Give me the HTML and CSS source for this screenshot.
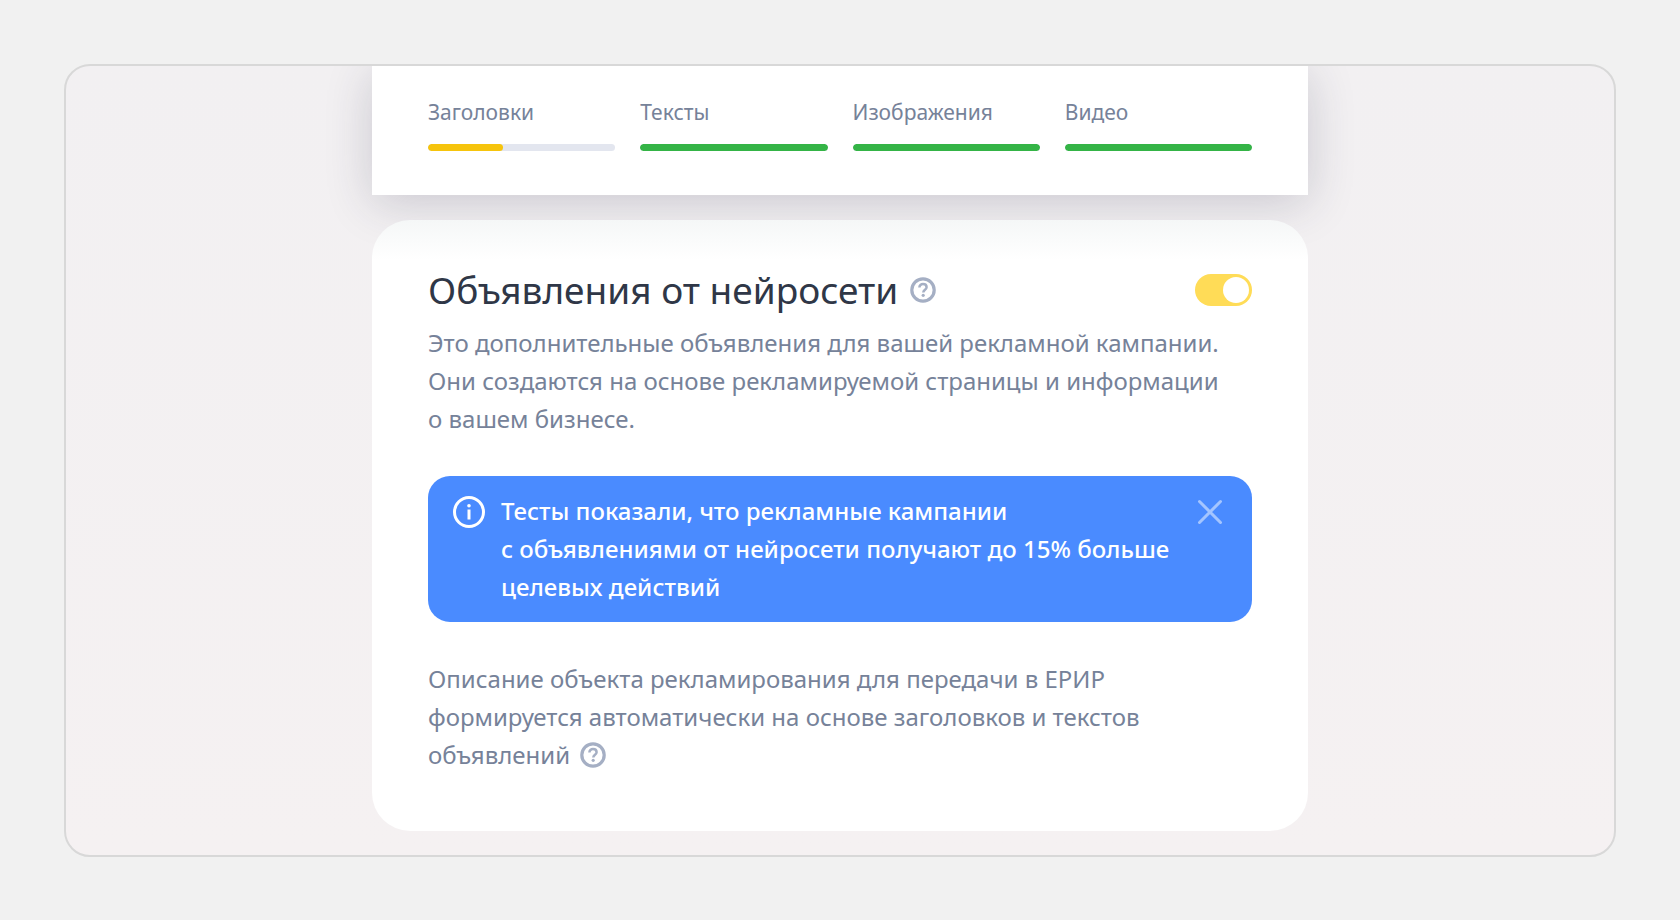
FILE: index.html
```html
<!DOCTYPE html>
<html lang="ru">
<head>
<meta charset="utf-8">
<meta name="viewport" content="width=device-width, initial-scale=1">
<title>Объявления от нейросети</title>
<link rel="stylesheet" href="styles.css">
</head>
<body>
<main class="frame">

<section class="quality">
  <div class="metric">
    <span class="metric-name">Заголовки</span>
    <div class="bar"><div class="fill part" style="width:40%"></div></div>
  </div>
  <div class="metric">
    <span class="metric-name">Тексты</span>
    <div class="bar"><div class="fill" style="width:100%"></div></div>
  </div>
  <div class="metric">
    <span class="metric-name">Изображения</span>
    <div class="bar"><div class="fill" style="width:100%"></div></div>
  </div>
  <div class="metric">
    <span class="metric-name">Видео</span>
    <div class="bar"><div class="fill" style="width:100%"></div></div>
  </div>
</section>

<section class="card">
  <div class="head">
    <h1 id="title">Объявления от нейросети</h1>
    <button type="button" class="help" aria-label="Подсказка">
      <svg width="26" height="26" viewBox="0 0 26 26" fill="none" stroke="currentColor">
        <circle cx="13" cy="13" r="11.2" stroke-width="3.2"/>
        <path d="M9.4 10.4C9.4 8.3 11 7.1 13 7.1s3.6 1.2 3.6 3.1c0 2.5-3.3 2.5-3.3 5.2" stroke-width="2.5"/>
        <circle cx="13.2" cy="18.3" r="1.6" fill="currentColor" stroke="none"/>
      </svg>
    </button>
    <input type="checkbox" class="toggle" aria-labelledby="title" checked>
  </div>
  <p>Это дополнительные объявления для вашей рекламной кампании.<br>
  Они создаются на основе рекламируемой страницы и информации<br>
  о вашем бизнесе.</p>

  <div class="notice">
    <svg class="info" width="32" height="32" viewBox="0 0 32 32" fill="none" stroke="currentColor">
      <circle cx="16" cy="16" r="14.5" stroke-width="3"/>
      <path d="M16 13.5v10" stroke-width="3"/>
      <circle cx="16" cy="9.8" r="1.8" fill="currentColor" stroke="none"/>
    </svg>
    <p>Тесты показали, что рекламные кампании<br>
    с объявлениями от нейросети получают до 15% больше<br>
    целевых действий</p>
    <button type="button" class="close" aria-label="Закрыть">
      <svg width="26" height="26" viewBox="0 0 26 26" fill="none" stroke="currentColor" stroke-width="3" stroke-linecap="round">
        <path d="M2.5 2.5l21 21M23.5 2.5l-21 21"/>
      </svg>
    </button>
  </div>

  <p>Описание объекта рекламирования для передачи в ЕРИР<br>
  формируется автоматически на основе заголовков и текстов<br>
  объявлений
  <button type="button" class="help" aria-label="Подсказка">
    <svg width="26" height="26" viewBox="0 0 26 26" fill="none" stroke="currentColor">
      <circle cx="13" cy="13" r="11.2" stroke-width="3.2"/>
      <path d="M9.4 10.4C9.4 8.3 11 7.1 13 7.1s3.6 1.2 3.6 3.1c0 2.5-3.3 2.5-3.3 5.2" stroke-width="2.5"/>
      <circle cx="13.2" cy="18.3" r="1.6" fill="currentColor" stroke="none"/>
    </svg>
  </button></p>
</section>

</main>
</body>
</html>
```
FILE: styles.css
```css
* { box-sizing: border-box; }
body {
  margin: 0;
  padding: 64px 64px 0;
  background: #f1f1f1;
  font-family: "Noto Sans", "Open Sans", sans-serif;
  color: #768299;
}
.frame {
  border: 2px solid #d8d8d8;
  border-radius: 26px;
  background: linear-gradient(#f2f0f2, #f5f1f2);
  padding: 0 24px 24px;
  overflow: hidden;
}

/* ad quality bars */
.quality {
  display: grid;
  grid-template-columns: repeat(4, 1fr);
  gap: 25px;
  max-width: 936px;
  margin: 0 auto;
  padding: 31px 56px 44px;
  background: #fff;
  box-shadow: 0 8px 48px rgba(40, 40, 70, .2);
}
.metric-name {
  display: block;
  font-size: 21px;
  line-height: 30px;
  margin-bottom: 17px;
}
.bar {
  height: 7px;
  border-radius: 4px;
  background: #e3e6ef;
  overflow: hidden;
}
.fill {
  height: 100%;
  border-radius: 4px;
  background: #34b446;
}
.fill.part { background: #f6c40c; }

.card {
  max-width: 936px;
  margin: 25px auto 0;
  padding: 46px 56px 57px;
  border-radius: 38px;
  background: linear-gradient(#f5f7f7, #fff 40px);
  position: relative;
}
.head {
  display: flex;
  align-items: center;
  margin-bottom: 10px;
}
h1 {
  margin: 0 12px 0 0;
  font-size: 37px;
  font-weight: 400;
  line-height: 48px;
  color: #2f3747;
}
p {
  margin: 0;
  font-size: 24px;
  line-height: 38px;
}
button {
  padding: 0;
  border: 0;
  background: none;
  cursor: pointer;
}
svg { display: block; }
.help { color: #a5afc4; }
p .help {
  vertical-align: -4px;
  margin-left: 4px;
}
.toggle {
  appearance: none;
  width: 57px;
  height: 32px;
  margin: 0 0 0 auto;
  padding: 3px;
  border-radius: 16px;
  background: #cfd4de;
  cursor: pointer;
}
.toggle::before {
  content: "";
  display: block;
  width: 26px;
  height: 26px;
  border-radius: 50%;
  background: #fff;
}
.toggle:checked { background: #ffdc57; }
.toggle:checked::before { margin-left: auto; }

.notice {
  display: flex;
  align-items: flex-start;
  margin: 38px 0;
  padding: 16px 29px 16px 25px;
  border-radius: 22px;
  background: #4a8bff;
  color: #fff;
}
.notice p {
  flex: 1;
  font-weight: 500;
}
.info { margin: 4px 16px 0 0; }
.close {
  margin-top: 7px;
  color: #a4c5ff;
}
```
